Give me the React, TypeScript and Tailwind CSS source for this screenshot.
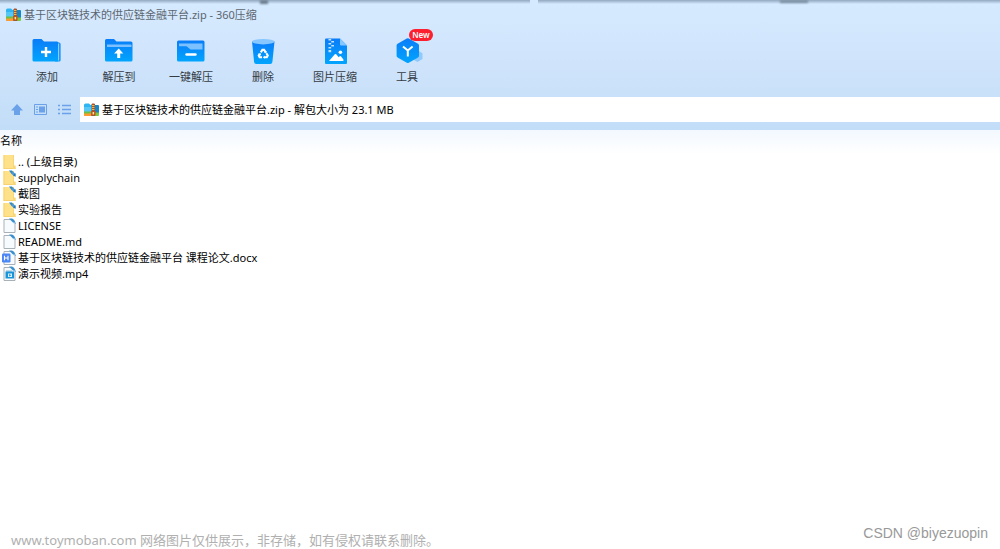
import type { ReactNode } from "react";

function ArchiveIcon() {
  return (
    <svg className="h-4 w-4 shrink-0" viewBox="0 0 16 16" aria-hidden="true">
      <path d="M0 3Q0 1.500 1.500 1.500H5L6.500 3H8v7H0z" fill="#31b5f2" />
      <path d="M0 5h8v5H0z" fill="#56c8f7" />
      <path d="M0 9.500h7.500V14H1.200Q0 14 0 12.800z" fill="#6cc04a" />
      <path d="M0 11.500h7.500V14H1.200Q0 14 0 12.800z" fill="#ff9a2e" />
      <path d="M10.500 3H14q1 0 1 1v7h-4.500z" fill="#1687c4" />
      <path d="M10.500 10.500H15V13q0 1-1 1h-3.500z" fill="#7bc843" />
      <path d="M7.500 2h3.500v12H7.500z" fill="#3f6d85" />
      <path d="M8 1.500h2.500V9H8z" fill="#b5521b" />
      <path d="M8 3h2.500v1H8zm0 2h2.500v1H8zm0 2h2.500v1H8z" fill="#ffb53f" />
      <path d="M7.200 9H11.500v4.600H7.200z" fill="#cf4f12" />
      <path d="M8.600 10h1.500v2.400H8.600z" fill="#ffe9a8" />
    </svg>
  );
}

function Gradient({ id }: { id: string }) {
  return (
    <defs>
      <linearGradient id={id} x1="0" y1="0" x2="0" y2="1">
        <stop offset="0" stopColor="#0a7cf8" />
        <stop offset="1" stopColor="#02a5fd" />
      </linearGradient>
    </defs>
  );
}

function ToolIcon({ id, children }: { id: string; children: ReactNode }) {
  return (
    <svg className="h-8 w-8" viewBox="0 0 32 32" aria-hidden="true">
      <Gradient id={id} />
      {children}
    </svg>
  );
}

const tools: { label: string; badge?: string; icon: ReactNode }[] = [
  {
    label: "添加",
    icon: (
      <ToolIcon id="add">
        <path d="M26 7.500h2q1.600 0 1.600 1.600V25q0 1.500-1.500 1.500H24z" fill="#1593fb" />
        <path d="M1.500 5.500q0-1.500 1.500-1.500h7.500L13 6.500h13q1.500 0 1.500 1.500v17q0 1.500-1.500 1.500H3q-1.500 0-1.500-1.500z" fill="url(#add)" />
        <path d="M27.600 8.500v17" stroke="#9ad2ff" strokeWidth="1" />
        <path d="M15 12v10M10 17h10" stroke="#fff" strokeWidth="2.400" />
      </ToolIcon>
    ),
  },
  {
    label: "解压到",
    icon: (
      <ToolIcon id="extract">
        <path d="M2 5.500Q2 4 3.500 4H11l2.500 2.500h14.500q1.500 0 1.500 1.500v17q0 1.500-1.500 1.500H3.500Q2 26.500 2 25z" fill="url(#extract)" />
        <path d="M4 9.500h23.500q1 0 1 1V12H4z" fill="#7cc0ff" />
        <path d="M15.700 13.500l4.600 5H17.200v4.500h-3v-4.500h-3.100z" fill="#fff" />
      </ToolIcon>
    ),
  },
  {
    label: "一键解压",
    icon: (
      <ToolIcon id="quick">
        <path d="M2 7q0-1.500 1.500-1.500h24.500q1.500 0 1.500 1.500v18q0 1.500-1.500 1.500H3.500Q2 26.500 2 25z" fill="url(#quick)" />
        <path d="M4 8.500h23.500v6H15.500l-4-3.200H4z" fill="#7cc0ff" />
        <path d="M11.500 19.500h9" stroke="#fff" strokeWidth="2.400" strokeLinecap="round" />
      </ToolIcon>
    ),
  },
  {
    label: "删除",
    icon: (
      <ToolIcon id="remove">
        <path d="M5 6.500h22.500L25.400 27q-.2 2-2.200 2H9.300q-2 0-2.200-2z" fill="url(#remove)" />
        <ellipse cx="16.200" cy="6.700" rx="11.200" ry="2.700" fill="#86c7ff" />
        <g transform="translate(3.400 4.200) scale(.8)">
          <g fill="none" stroke="#fff" strokeWidth="2.600">
            <path d="M13 16.500l2-3.200h2.200l1.800 3" />
            <path d="M20 17.500l1.700 3-1.200 2H17" />
            <path d="M14.500 22.500h-3l-1.100-2 1.300-2.300" />
          </g>
          <path d="M20.500 14.800l-.5 3-2.900-1.500zM17.800 20.600v3.800L15.500 22.500zM10 18.300l3-.8.2 3.200z" fill="#fff" />
        </g>
      </ToolIcon>
    ),
  },
  {
    label: "图片压缩",
    icon: (
      <ToolIcon id="image">
        <path d="M6 4.500Q6 3.500 7 3.500h14l7 7V28q0 1-1 1H7q-1 0-1-1z" fill="url(#image)" />
        <path d="M21 3.500l7 7h-6q-1 0-1-1z" fill="#85c8ff" />
        <path d="M9.500 4h2.700v1.600H9.500zm2.700 2H15v1.600h-2.800zM9.500 8h2.700v1.600H9.500zm2.700 2H15v1.600h-2.800zM9.500 12h2.700v1.600H9.500zm0 3h2.700v2.200H9.500z" fill="#c2e2ff" />
        <circle cx="21.400" cy="17.200" r="1.800" fill="#fff" />
        <path d="M10 26l5.800-6.700q.7-.8 1.400 0l2.500 3 1-1q.7-.7 1.400.1l2.300 3.200V26z" fill="#fff" />
      </ToolIcon>
    ),
  },
  {
    label: "工具",
    badge: "New",
    icon: (
      <ToolIcon id="kit">
        <path d="M27 15.500l4.500 2.800v5.700L26.500 27l-5.300-3v-6z" fill="#91c9fb" />
        <path d="M15.800 3.500q1-.6 2 0l9.200 5.300q1 .6 1 1.700v10.200q0 1.100-1 1.700l-9.200 5.300q-1 .6-2 0l-9.200-5.300q-1-.6-1-1.700V10.500q0-1.100 1-1.700z" fill="url(#kit)" />
        <path d="M12 11.500l4.800 4L21.600 11.500M16.800 15.500v6" fill="none" stroke="#fff" strokeWidth="2" />
      </ToolIcon>
    ),
  },
];

type Kind = "parent" | "folder" | "file" | "word" | "video";

function EntryIcon({ kind }: { kind: Kind }) {
  if (kind === "parent" || kind === "folder") {
    return (
      <svg className="h-4 w-4 shrink-0" viewBox="0 0 16 16" aria-hidden="true">
        <path d="M1.500 1H12v11h1.500v3h-12z" fill="#ffe18a" />
        <path d="M1.500 1H2.500v14h-1zM1.500 14h12v1h-12z" fill="#f5d370" />
        <path d="M11 11.500h2.500V15H11z" fill="#f7d777" />
        <path d="M11.200 1H12v11h-.8z" fill="#f4d472" />
        {kind === "folder" && (
          <>
            <path d="M7 .5h3l1.500 2L9.500 4z" fill="#2f86c8" />
            <path d="M9.500 2.500l1.500-1L13.500 4V7L9.500 4z" fill="#4a9ad6" />
            <path d="M11 5.500L13.500 3v3.500z" fill="#2275b8" />
          </>
        )}
      </svg>
    );
  }
  return (
    <svg className="h-4 w-4 shrink-0" viewBox="0 0 16 16" aria-hidden="true">
      <path d="M2 1.500h7l4 3.500v9.500H2z" fill="#f8fbfe" stroke="#a9b1b8" />
      <path d="M7 .5h3q3 1 3.800 5.500L11 4.500z" fill="#3a8fcf" />
      <path d="M8.500 2.500l2.500 2.500h2" fill="none" stroke="#d7e9f7" strokeWidth=".8" />
      {kind === "word" && (
        <>
          <rect x="0" y="3.500" width="8.500" height="9" rx="1.200" fill="#4a86f5" />
          <path d="M2.500 5.700v4.600M6 5.700v4.600M2.500 8H6" stroke="#fff" strokeWidth="1.100" />
        </>
      )}
      {kind === "video" && (
        <>
          <path d="M3.500 5.500H12V12.500H3.500z" fill="#1994d8" />
          <path d="M4.500 5h5" stroke="#0f74b5" strokeDasharray="1 1" />
          <path d="M6 7.500h4v3.500H6z" fill="#d8f0ff" />
          <path d="M7.200 8l2 1.200-2 1.200z" fill="#1688d4" />
        </>
      )}
    </svg>
  );
}

const entries: { name: string; kind: Kind }[] = [
  { name: ".. (上级目录)", kind: "parent" },
  { name: "supplychain", kind: "folder" },
  { name: "截图", kind: "folder" },
  { name: "实验报告", kind: "folder" },
  { name: "LICENSE", kind: "file" },
  { name: "README.md", kind: "file" },
  { name: "基于区块链技术的供应链金融平台 课程论文.docx", kind: "word" },
  { name: "演示视频.mp4", kind: "video" },
];

export default function App() {
  return (
    <div className="flex min-h-screen flex-col bg-white font-['Noto_Sans','Noto_Sans_CJK_SC',sans-serif] text-[11px] leading-4 text-black">
      <header className="relative bg-linear-to-b from-[#d6eaff] via-[#cfe4fb] to-[#c2ddf8]">
        <div className="absolute inset-x-0 top-0 flex h-1" aria-hidden="true">
          <span className="w-[53%] bg-linear-to-b from-[#91a8bf] to-[#d6eaff]" />
          <span className="w-2" />
          <span className="grow bg-linear-to-b from-[#91a8bf] to-[#d6eaff]" />
        </div>
        <span className="absolute top-0 left-[26%] h-1 w-2 bg-[#6d7f90] blur-[1px]" aria-hidden="true" />
        <span className="absolute top-0 left-[78%] h-[3px] w-7 bg-[#7c8fa2] blur-[1px]" aria-hidden="true" />
        <div className="flex h-[30px] items-center gap-0.5 pl-1.5 text-[#5c6670]">
          <ArchiveIcon />
          <h1>基于区块链技术的供应链金融平台.zip - 360压缩</h1>
        </div>
        <nav className="flex pt-[5px] pb-3 pl-[11px] text-[#333b44]" aria-label="工具栏">
          {tools.map((tool) => (
            <button key={tool.label} type="button" className="relative flex w-[72px] flex-col items-center gap-0.5 whitespace-nowrap">
              {tool.icon}
              <span>{tool.label}</span>
              {tool.badge && (
                <span className="absolute -top-1.5 left-[38px] flex h-3 w-6 items-center justify-center rounded-full bg-[#fb1f2f] text-[8px] font-semibold text-white">
                  {tool.badge}
                </span>
              )}
            </button>
          ))}
        </nav>
        <div className="flex items-center pb-2">
          <div className="flex w-20 shrink-0 gap-2 pl-[9px] text-[#6aa1e9]">
            <button type="button" aria-label="向上" className="h-4 w-4">
              <svg viewBox="0 0 16 16" fill="currentColor" aria-hidden="true">
                <path d="M8 2l6 6.500h-3V13H5V8.500H2z" />
              </svg>
            </button>
            <button type="button" aria-label="预览" className="h-4 w-4">
              <svg viewBox="0 0 16 16" fill="none" stroke="currentColor" aria-hidden="true">
                <path d="M1.500 2.500h12v10h-12z" />
                <path d="M6 4.500h6v6H6z" fill="currentColor" stroke="none" />
                <path d="M3 5h2M3 7.500h2M3 10h2" />
              </svg>
            </button>
            <button type="button" aria-label="列表" className="h-4 w-4">
              <svg viewBox="0 0 16 16" stroke="currentColor" strokeWidth="1.500" aria-hidden="true">
                <path d="M1 3.500h2M5 3.500h9M1 7.500h2M5 7.500h9M1 11.500h2M5 11.500h9" />
              </svg>
            </button>
          </div>
          <div className="flex h-[25px] grow items-center gap-0.5 bg-white pl-1">
            <ArchiveIcon />
            <span>基于区块链技术的供应链金融平台.zip - 解包大小为 23.1 MB</span>
          </div>
        </div>
      </header>
      <main className="grow">
        <table className="w-full border-collapse text-left">
          <thead>
            <tr className="h-6 bg-linear-to-b from-[#f2f8ff] to-white">
              <th scope="col" className="p-0 pb-0.5 font-normal">名称</th>
            </tr>
          </thead>
          <tbody>
            {entries.map((entry) => (
              <tr key={entry.name}>
                <td className="p-0">
                  <div className="flex h-4 items-center pl-0.5">
                    <EntryIcon kind={entry.kind} />
                    <span className="whitespace-nowrap">{entry.name}</span>
                  </div>
                </td>
              </tr>
            ))}
          </tbody>
        </table>
      </main>
      <footer className="flex items-end justify-between pr-3 pl-[11px]">
        <p className="text-[13px] leading-[18px] text-[#b0b0b0]">www.toymoban.com 网络图片仅供展示，非存储，如有侵权请联系删除。</p>
        <p className="pb-1.5 font-['Liberation_Sans',sans-serif] text-sm text-[#999]">CSDN @biyezuopin</p>
      </footer>
    </div>
  );
}
